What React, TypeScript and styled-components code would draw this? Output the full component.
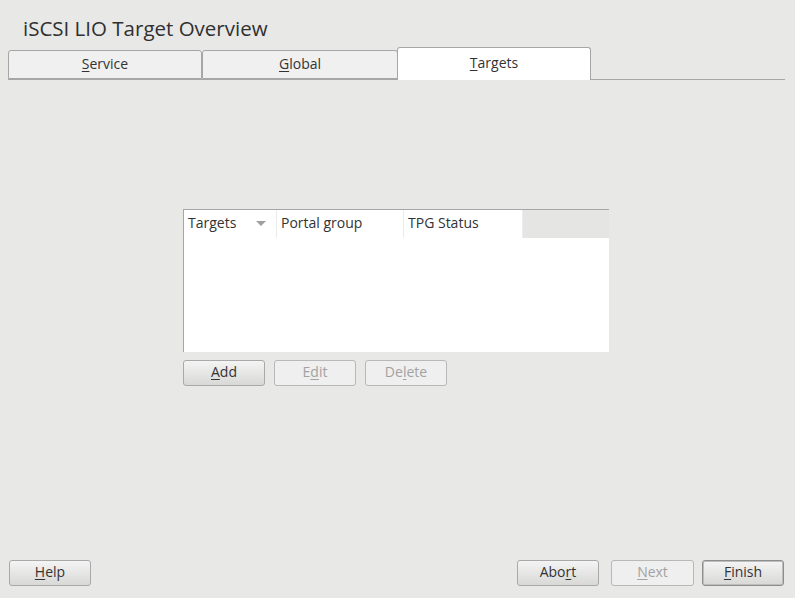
import React from "react";
import styled, { createGlobalStyle } from "styled-components";

const Global = createGlobalStyle`
  html, body { margin: 0; padding: 0; background: #e8e8e7; }
  body { font-family: "Open Sans", "DejaVu Sans", sans-serif; color: #333; }
`;

const Page = styled.div`
  width: 795px;
  height: 598px;
  display: flex;
  flex-direction: column;
  overflow: hidden;
`;

const Title = styled.h1`
  margin: 0;
  padding: 14px 0 0 23px;
  height: 35px;
  box-sizing: border-box;
  font-size: 20.5px;
  font-weight: 400;
  line-height: 28px;
  color: #303030;
`;

const TabBar = styled.div`
  display: flex;
  align-items: flex-end;
  margin: 12px 10px 0 8px;
  height: 32px;
  border-bottom: 1px solid #a6a6a6;
`;

const Tab = styled.div<{ $active?: boolean; $w: number }>`
  width: ${(p) => p.$w}px;
  box-sizing: border-box;
  height: ${(p) => (p.$active ? 33 : 29)}px;
  margin-bottom: ${(p) => (p.$active ? -1 : 0)}px;
  margin-left: ${(p) => (p.$active ? -1 : 0)}px;
  background: ${(p) => (p.$active ? "#ffffff" : "#f0f0f0")};
  border: 1px solid #a6a6a6;
  border-bottom: ${(p) => (p.$active ? "none" : "1px solid #a6a6a6")};
  border-radius: 3px 3px 0 0;
  display: flex;
  align-items: center;
  justify-content: center;
  font-size: 14px;
  color: #333;
  padding-bottom: ${(p) => (p.$active ? 4 : 2)}px;
`;

const U = styled.span`
  text-decoration: underline;
  text-underline-offset: 2px;
`;

const Main = styled.div`
  flex: 1;
  display: flex;
  flex-direction: column;
  align-items: flex-start;
  padding: 129px 0 0 183px;
`;

const Block = styled.div`
  width: 426px;
  display: flex;
  flex-direction: column;
`;

const Table = styled.div`
  border-top: 1px solid #a6a6a6;
  border-left: 1px solid #a6a6a6;
  background: #fff;
  height: 142px;
  display: flex;
  flex-direction: column;
`;

const HeaderRow = styled.div`
  display: flex;
  height: 28px;
`;

const HeaderCell = styled.div<{ $w: number }>`
  width: ${(p) => p.$w}px;
  box-sizing: border-box;
  border-right: 1px solid #ececec;
  padding: 0 0 3px 4px;
  display: flex;
  align-items: center;
  justify-content: space-between;
  font-size: 14px;
  color: #333;
  background: #fff;
`;

const HeaderFill = styled.div`
  flex: 1;
  background: #e5e5e3;
`;

const SortArrow = styled.span`
  width: 0;
  height: 0;
  border-left: 5px solid transparent;
  border-right: 5px solid transparent;
  border-top: 5px solid #a0a0a0;
  margin: 2px 10px 0 0;
`;

const ButtonRow = styled.div`
  display: flex;
  gap: 9px;
  margin-top: 8px;
`;

const Button = styled.button<{ $disabled?: boolean; $default?: boolean; $w?: number }>`
  width: ${(p) => p.$w ?? 82}px;
  height: 26px;
  box-sizing: border-box;
  border-radius: 3px;
  border: 1px solid ${(p) => (p.$disabled ? "#b8b8b8" : p.$default ? "#8e8e8e" : "#a9a9a9")};
  box-shadow: ${(p) => (p.$default ? "inset 0 0 0 1px #bdbdbd" : "none")};
  background: ${(p) =>
    p.$disabled ? "#efefef" : "linear-gradient(to bottom, #f4f4f4, #d8d8d7)"};
  color: ${(p) => (p.$disabled ? "#a2a2a2" : "#333")};
  font-family: "Open Sans", "DejaVu Sans", sans-serif;
  font-size: 14px;
  padding: 0 0 3px 0;
  display: flex;
  align-items: center;
  justify-content: center;
`;

const Footer = styled.div`
  display: flex;
  align-items: center;
  padding: 0 11px 12px 9px;
`;

const Spacer = styled.div`
  flex: 1;
`;

const RightGroup = styled.div`
  display: flex;
  gap: 8px;
`;

const Abort = styled(Button)`
  margin-right: 4px;
`;

export default function App() {
  return (
    <Page>
      <Global />
      <Title>iSCSI LIO Target Overview</Title>
      <TabBar>
        <Tab $w={194}><span><U>S</U>ervice</span></Tab>
        <Tab $w={196}><span><U>G</U>lobal</span></Tab>
        <Tab $w={194} $active><span><U>T</U>argets</span></Tab>
      </TabBar>
      <Main>
        <Block>
          <Table>
            <HeaderRow>
              <HeaderCell $w={93}>Targets<SortArrow /></HeaderCell>
              <HeaderCell $w={127}>Portal group</HeaderCell>
              <HeaderCell $w={119}>TPG Status</HeaderCell>
              <HeaderFill />
            </HeaderRow>
          </Table>
          <ButtonRow>
            <Button><span><U>A</U>dd</span></Button>
            <Button $disabled><span>E<U>d</U>it</span></Button>
            <Button $disabled><span>De<U>l</U>ete</span></Button>
          </ButtonRow>
        </Block>
      </Main>
      <Footer>
        <Button><span><U>H</U>elp</span></Button>
        <Spacer />
        <RightGroup>
          <Abort><span>Abo<U>r</U>t</span></Abort>
          <Button $disabled $w={83}><span><U>N</U>ext</span></Button>
          <Button $default><span><U>F</U>inish</span></Button>
        </RightGroup>
      </Footer>
    </Page>
  );
}
